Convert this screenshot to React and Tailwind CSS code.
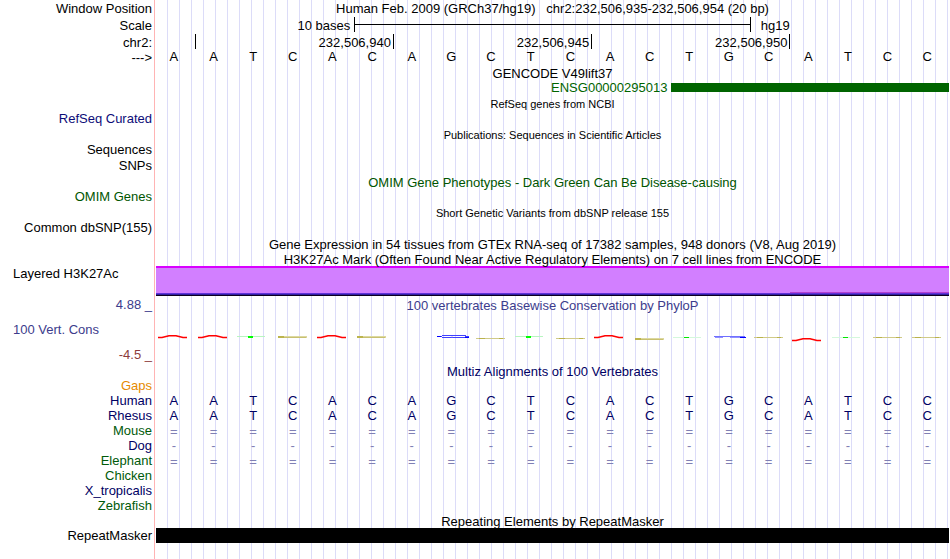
const BASES = 'AATCACAGCTCACTGCATCC'.split('');

const LABELS = [
  { text: 'Window Position', cls: 'h-[17px]' },
  { text: 'Scale', cls: 'h-[17px]' },
  { text: 'chr2:', cls: 'h-[15px]' },
  { text: '--->', cls: 'h-[61px]' },
  { text: 'RefSeq Curated', cls: 'h-[31px] text-[#0c0c78]' },
  { text: 'Sequences', cls: 'h-4' },
  { text: 'SNPs', cls: 'h-[31px]' },
  { text: 'OMIM Genes', cls: 'h-[31px] text-[#005500]' },
  { text: 'Common dbSNP(155)', cls: 'h-[46px]' },
  { text: 'Layered H3K27Ac', cls: 'h-[31px] pl-[13px] text-left' },
  { text: '4.88 _', cls: 'h-[25px] text-[#3c3c8c]' },
  { text: '100 Vert. Cons', cls: 'h-[25px] pl-[13px] text-left text-[#3c3c8c]' },
  { text: '-4.5 _', cls: 'h-[31px] text-[#8c3c3c]' },
  { text: 'Gaps', cls: 'h-[15px] text-[#e68a00]' },
  { text: 'Human', cls: 'h-[15px] text-[#000064]' },
  { text: 'Rhesus', cls: 'h-[15px] text-[#000064]' },
  { text: 'Mouse', cls: 'h-[15px] text-[#005a0a]' },
  { text: 'Dog', cls: 'h-[15px] text-[#000064]' },
  { text: 'Elephant', cls: 'h-[15px] text-[#005a0a]' },
  { text: 'Chicken', cls: 'h-[15px] text-[#005a0a]' },
  { text: 'X_tropicalis', cls: 'h-[15px] text-[#000064]' },
  { text: 'Zebrafish', cls: 'h-[30px] text-[#005a0a]' },
  { text: 'RepeatMasker', cls: 'h-[30px]' },
];

// One mark per base: kind of nucleotide glyph and its vertical offset.
const MARKS = [
  ['A', 0], ['A', 0], ['T', 0], ['Cthick', 0], ['A', 0], ['Cthick', 0], ['', 0],
  ['G', 0], ['C', 1], ['T', 0], ['C', 1], ['A', 0], ['Cthick', 2], ['Tthin', 0],
  ['Gthin', 0], ['C', 0], ['A', 3], ['Tthin', 0], ['C', 0], ['C', 0],
];

function Mark({ kind, dy }) {
  return (
    <svg width="37" height="15" viewBox="0 0 37 15" aria-hidden="true">
      <g transform={`translate(0 ${dy})`} fill="none">
        {kind === 'A' && (
          <path d="M2 7.5 H6 L13 5.7 H20 L27 7.5 H31" stroke="#ff0000" strokeWidth="1.4" />
        )}
        {kind === 'T' && (
          <>
            <path d="M2 6.5 H30" stroke="#b8f5c0" />
            <rect x="13" y="6" width="5" height="2" fill="#00ff00" />
          </>
        )}
        {kind === 'Tthin' && (
          <>
            <path d="M2 7.5 H30" stroke="#d4f8dc" />
            <path d="M13 7.5 H18" stroke="#00e800" />
          </>
        )}
        {kind === 'Cthick' && (
          <>
            <rect x="3" y="6" width="29" height="2" fill="#dcd8a0" />
            <rect x="3" y="6" width="6" height="2" fill="#bcb44c" />
            <path d="M9 7.5 H31" stroke="#c8c070" />
          </>
        )}
        {kind === 'C' && (
          <>
            <path d="M3 7.5 H32" stroke="#d0ca88" />
            <path d="M6 7.5 H12 M26 7.5 H30" stroke="#bab24c" />
          </>
        )}
        {kind === 'G' && (
          <>
            <path d="M8 5.5 H32 M3 6.5 H8 M31 6.5 H35 M8 7.5 H35" stroke="#4040ff" />
            <path d="M3 6.5 H7 M31 7.5 H35" stroke="#0000ff" />
            <path d="M18 6.5 V7.5" stroke="#8080ff" />
          </>
        )}
        {kind === 'Gthin' && (
          <>
            <path d="M3 6.5 H34" stroke="#7070ff" />
            <path d="M4 7.5 H12 M19 7.5 H35" stroke="#9090ff" />
            <path d="M29 7.5 H35" stroke="#0000ff" />
          </>
        )}
      </g>
    </svg>
  );
}

function Title({ children, className = '' }) {
  return <div className={`text-center whitespace-pre ${className}`}>{children}</div>;
}

function BaseRow({ symbol, className = '' }) {
  return (
    <div className={`grid h-[15px] grid-cols-20 text-center ${className}`}>
      {BASES.map((b, i) => (
        <span key={i} className="pr-1">{symbol || b}</span>
      ))}
    </div>
  );
}

export default function App() {
  return (
    <div className="flex min-h-screen bg-white font-['Liberation_Sans',Arial,sans-serif] text-[13px] leading-[15px] text-black">
      <aside className="w-[155px] shrink-0 border-r border-[#ffb4b4] pt-px pr-0.5 text-right whitespace-nowrap">
        {LABELS.map((l) => (
          <div key={l.text} className={l.cls}>{l.text}</div>
        ))}
      </aside>

      <main className="mx-px min-w-0 flex-1 bg-[repeating-linear-gradient(to_right,transparent_0px,transparent_11px,#dcdcf8_11px,#dcdcf8_12px)]">
        <Title className="h-[17px] leading-[17px]">Human Feb. 2009 (GRCh37/hg19)   chr2:232,506,935-232,506,954 (20 bp)</Title>

        <div className="grid h-[17px] grid-cols-20 leading-[17px]">
          <span className="col-span-5 pr-1 text-right">10 bases</span>
          <div className="col-span-10 flex h-[15px] items-center border-x border-black">
            <div className="h-px flex-1 bg-black" />
          </div>
          <span className="col-span-5 pl-2.5">hg19</span>
        </div>

        <div className="grid h-4 grid-cols-20 text-right leading-[17px]">
          <span className="col-span-1 h-[15px] border-r border-black" />
          <span className="col-span-5 h-[15px] border-r border-black pr-0.5">232,506,940</span>
          <span className="col-span-5 h-[15px] border-r border-black pr-0.5">232,506,945</span>
          <span className="col-span-5 h-[15px] border-r border-black pr-0.5">232,506,950</span>
        </div>

        <BaseRow className="leading-[13px]" />
        <Title className="mt-px h-[15px]">GENCODE V49lift37</Title>
        <div className="grid h-4 grid-cols-20 leading-[13px] text-[#006400]">
          <span className="col-span-13 pr-1 text-right">ENSG00000295013</span>
          <div className="col-span-7 mt-0.5 h-[9px] bg-[#006400]" />
        </div>
        <Title className="h-[31px] text-[11px]">RefSeq genes from NCBI</Title>
        <Title className="h-[47px] text-[11px]">Publications: Sequences in Scientific Articles</Title>
        <Title className="h-[31px] text-[#005500]">OMIM Gene Phenotypes - Dark Green Can Be Disease-causing</Title>
        <Title className="h-[31px] text-[11px]">Short Genetic Variants from dbSNP release 155</Title>
        <Title className="h-[15px]">Gene Expression in 54 tissues from GTEx RNA-seq of 17382 samples, 948 donors (V8, Aug 2019)</Title>
        <Title className="h-[14px]">H3K27Ac Mark (Often Found Near Active Regulatory Elements) on 7 cell lines from ENCODE</Title>

        <div className="flex h-[30px] flex-col border-t-2 border-b border-t-[#d800ff] border-b-[#100020] bg-[#d27fff]">
          <div className="mt-auto grid grid-cols-20">
            <div className="col-span-4 col-start-17 h-px bg-[#b040d0]" />
          </div>
          <div className="h-px bg-[#6030d8]" />
          <div className="h-px bg-[#3020a0]" />
        </div>

        <Title className="mt-0.5 h-8 text-[#3c3c8c]">100 vertebrates Basewise Conservation by PhyloP</Title>
        <div className="grid h-[34px] grid-cols-20">
          {MARKS.map(([kind, dy], i) => (
            <Mark key={i} kind={kind} dy={dy} />
          ))}
        </div>

        <Title className="h-[29px] text-[#000064]">Multiz Alignments of 100 Vertebrates</Title>
        <BaseRow className="text-[#000064]" />
        <BaseRow className="text-[#000064]" />
        <BaseRow symbol="=" className="leading-[17px] text-[#8080b4]" />
        <BaseRow symbol="-" className="text-[#8080b4]" />
        <BaseRow symbol="=" className="leading-[17px] text-[#8080b4]" />

        <Title className="mt-[46px] h-[14px]">Repeating Elements by RepeatMasker</Title>
        <div className="h-[15px] bg-black" />
      </main>
    </div>
  );
}
